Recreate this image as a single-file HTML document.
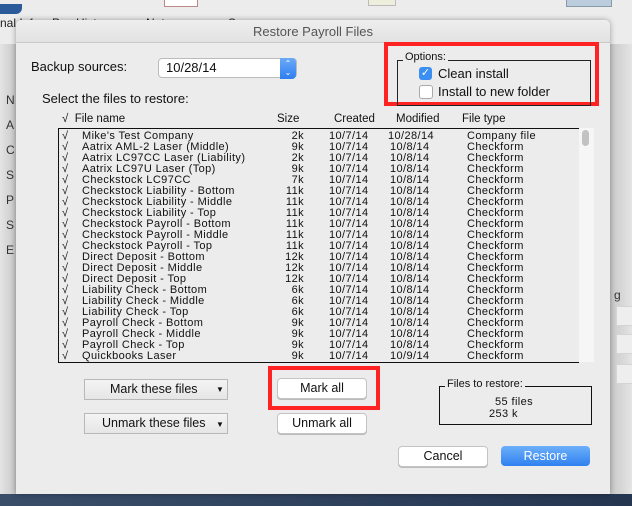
<html><head><style>
body{margin:0;width:632px;height:506px;position:relative;overflow:hidden;background:#e8e8e8;font-family:"Liberation Sans",sans-serif;}
.a{position:absolute;white-space:nowrap;}
.row{position:absolute;left:0;height:11px;font-size:11px;line-height:11px;letter-spacing:0.4px;color:#111;}
.row span{position:absolute;}
.btn{position:absolute;background:#fff;border:1px solid #c4c4c4;border-radius:4px;font-size:12.5px;text-align:center;color:#111;box-shadow:0 1px 0 #bbb;}
.pop{position:absolute;background:linear-gradient(#f4f4f4,#e6e6e6);border:1px solid #b8b8b8;font-size:12.5px;color:#111;}
</style></head><body>
<div class="a" style="left:0;top:0;width:632px;height:44px;background:#ececec;"></div>
<div class="a" style="left:0;top:4px;width:22px;height:10px;background:#2a5a9a;border-radius:0 0 6px 0"></div>
<div class="a" style="left:164px;top:0;width:32px;height:6px;border:1px solid #b88;border-top:none;background:#fff"></div>
<div class="a" style="left:368px;top:0;width:26px;height:5px;background:#eed;border:1px solid #bbb;border-top:none"></div>
<div class="a" style="left:566px;top:0;width:44px;height:6px;background:#bcd;border:1px solid #89a;border-top:none"></div>
<div class="a" style="left:0;top:16px;font-size:12px;color:#222">nal Info</div>
<div class="a" style="left:52px;top:16px;font-size:12px;color:#222">Pay History</div>
<div class="a" style="left:146px;top:16px;font-size:12px;color:#222">Notes</div>
<div class="a" style="left:228px;top:16px;font-size:12px;color:#222">Save</div>
<div class="a" style="left:0;top:44px;width:16px;height:450px;background:linear-gradient(90deg,#e4e4e4,#c8c8c8);"></div>
<div class="a" style="left:6px;top:88px;font-size:12px;color:#333;line-height:25px">N<br>A<br>C<br>S<br>P<br>S<br>E</div>
<div class="a" style="left:610px;top:44px;width:22px;height:450px;background:linear-gradient(90deg,#c8c8c8,#e4e4e4);"></div>
<div class="a" style="left:614px;top:288px;font-size:12px;color:#333">g</div>
<div class="a" style="left:616px;top:306px;width:16px;height:18px;background:#eee;border:1px solid #d4d4d4"></div>
<div class="a" style="left:616px;top:334px;width:16px;height:18px;background:#eee;border:1px solid #d4d4d4"></div>
<div class="a" style="left:616px;top:364px;width:16px;height:18px;background:#eee;border:1px solid #d4d4d4"></div>
<div class="a" style="left:0;top:494px;width:632px;height:12px;background:linear-gradient(90deg,#3a4e6a,#243650);"></div>
<div class="a" style="left:16px;top:20px;width:594px;height:474px;background:#ececec;border-radius:5px 5px 0 0;box-shadow:0 0 6px rgba(0,0,0,.35);"></div>
<div class="a" style="left:16px;top:20px;width:594px;height:22px;background:linear-gradient(#eeeeee,#e2e2e2);border-bottom:1px solid #c8c8c8;border-radius:5px 5px 0 0;text-align:center;font-size:13px;line-height:23px;color:#555">Restore Payroll Files</div>
<div class="a" style="left:31px;top:59px;font-size:13px;color:#111">Backup sources:</div>
<div class="a" style="left:158px;top:58px;width:137px;height:18px;background:#fff;border:1px solid #bbb;border-radius:4px;font-size:13px;line-height:18px;color:#111"><span style="margin-left:7px">10/28/14</span></div>
<div class="a" style="left:280px;top:58px;width:16px;height:20px;background:linear-gradient(#6aaaf8,#2f7ef0);border-radius:0 4px 4px 0;color:#fff;font-size:8px;text-align:center;line-height:9px;padding-top:1px">&#8963;<br>&#8964;</div>
<div class="a" style="left:42px;top:91px;font-size:13px;color:#111">Select the files to restore:</div>
<div class="a" style="left:384px;top:42px;width:215px;height:64px;border:4px solid #f22;box-sizing:border-box"></div>
<div class="a" style="left:397px;top:60px;width:194px;height:46px;border:1px solid #222;box-sizing:border-box"></div>
<div class="a" style="left:403px;top:51px;background:#ececec;padding:0 2px;font-size:11px;color:#111">Options:</div>
<div class="a" style="left:419px;top:67px;width:13px;height:13px;background:#3b8ef2;border-radius:3px;color:#fff;font-size:11px;line-height:13px;text-align:center">✓</div>
<div class="a" style="left:438px;top:66px;font-size:13px;color:#111">Clean install</div>
<div class="a" style="left:419px;top:85px;width:12px;height:12px;background:#fff;border:1px solid #aaa;border-radius:3px"></div>
<div class="a" style="left:438px;top:84px;font-size:13px;color:#111">Install to new folder</div>
<div class="a" style="left:62px;top:113px;font-size:11.5px;color:#111">√&nbsp; File name</div>
<div class="a" style="left:277px;top:113px;font-size:11.5px;color:#111">Size</div>
<div class="a" style="left:334px;top:113px;font-size:11.5px;color:#111">Created</div>
<div class="a" style="left:396px;top:113px;font-size:11.5px;color:#111">Modified</div>
<div class="a" style="left:462px;top:113px;font-size:11.5px;color:#111">File type</div>
<div class="a" style="left:58px;top:128px;width:520px;height:233px;border-top:1px solid #111;border-left:1px solid #111;border-bottom:1px solid #111;background:#ececec"></div>
<div class="a" style="left:579px;top:128px;width:15px;height:234px;background:#f6f6f6"></div>
<div class="a" style="left:582px;top:130px;width:7px;height:16px;background:#c2c2c2;border-radius:4px"></div>
<div id="list" class="a" style="left:0;top:131px;width:600px;height:232px"></div>
<script>
var d=[["Mike's Test Company","2k","10/28/14","Company file"],["Aatrix AML-2 Laser (Middle)","9k"],["Aatrix LC97CC Laser (Liability)","2k"],["Aatrix LC97U Laser (Top)","9k"],["Checkstock LC97CC","7k"],["Checkstock Liability - Bottom","11k"],["Checkstock Liability - Middle","11k"],["Checkstock Liability - Top","11k"],["Checkstock Payroll - Bottom","11k"],["Checkstock Payroll - Middle","11k"],["Checkstock Payroll - Top","11k"],["Direct Deposit - Bottom","12k"],["Direct Deposit - Middle","12k"],["Direct Deposit - Top","12k"],["Liability Check - Bottom","6k"],["Liability Check - Middle","6k"],["Liability Check - Top","6k"],["Payroll Check - Bottom","9k"],["Payroll Check - Middle","9k"],["Payroll Check - Top","9k"],["Quickbooks Laser","9k","10/9/14"]];
var h="";d.forEach(function(r,i){h+='<div class="row" style="top:'+(i*11)+'px;width:600px"><span style="left:62px">√</span><span style="left:82px">'+r[0]+'</span><span style="right:296px">'+r[1]+'</span><span style="left:329px">10/7/14</span><span style="left:'+(r[2]&&r[2].length>7?388:390)+'px">'+(r[2]||"10/8/14")+'</span><span style="left:467px">'+(r[3]||"Checkform")+'</span></div>';});
document.getElementById("list").innerHTML=h;
</script>
<div class="pop" style="left:84px;top:379px;width:142px;height:19px;"><span class="a" style="left:25px;top:2px">Mark these files</span><span class="a" style="left:131px;top:5px;font-size:8px">▼</span></div>
<div class="pop" style="left:84px;top:413px;width:142px;height:19px;"><span class="a" style="left:17px;top:2px">Unmark these files</span><span class="a" style="left:131px;top:6px;font-size:8px">▼</span></div>
<div class="a" style="left:268px;top:366px;width:112px;height:44px;border:4px solid #f22;box-sizing:border-box"></div>
<div class="btn" style="left:277px;top:378px;width:88px;height:19px;line-height:19px">Mark all</div>
<div class="btn" style="left:277px;top:413px;width:88px;height:19px;line-height:19px">Unmark all</div>
<div class="a" style="left:439px;top:386px;width:153px;height:39px;border:1px solid #111;box-sizing:border-box"></div>
<div class="a" style="left:445px;top:378px;background:#ececec;padding:0 2px;font-size:11px;color:#111">Files to restore:</div>
<div class="a" style="left:495px;top:396px;font-size:11px;letter-spacing:0.4px;color:#111">55 files</div>
<div class="a" style="left:489px;top:408px;font-size:11px;letter-spacing:0.4px;color:#111">253 k</div>
<div class="btn" style="left:398px;top:446px;width:88px;height:19px;line-height:19px">Cancel</div>
<div class="a" style="left:501px;top:446px;width:89px;height:20px;border-radius:4px;background:linear-gradient(#6cb0fa,#2f80f0);color:#fff;font-size:12.5px;text-align:center;line-height:20px">Restore</div>
</body></html>
